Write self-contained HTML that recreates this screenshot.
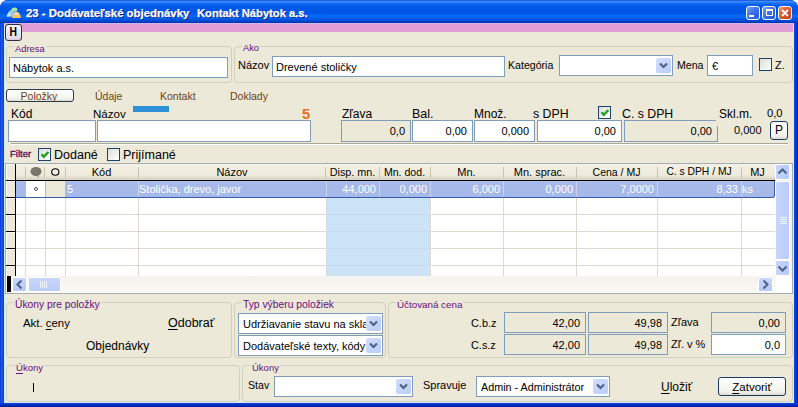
<!DOCTYPE html>
<html><head><meta charset="utf-8">
<style>
*{box-sizing:border-box;margin:0;padding:0}
html,body{width:798px;height:407px;overflow:hidden;background:#fff;font-family:"Liberation Sans",sans-serif;font-size:11px;color:#000}
body{position:relative}
u{text-underline-offset:2px}
.a{position:absolute}
#frame{position:absolute;left:0;top:0;width:798px;height:407px;background:#0831D9;border-radius:8px 8px 0 0}
#title{position:absolute;left:0;top:0;width:798px;height:23px;border-radius:8px 8px 0 0;background:linear-gradient(#0A48D0 0px,#3C8EFF 1.5px,#2A7CFA 2.5px,#0A66F2 4px,#0058E6 7px,#0055E4 13px,#0A6AF8 16px,#0060EE 18px,#0050DC 20px,#0042C8 21.5px,#0030A8 23px)}
#ttext{position:absolute;left:26px;top:6px;color:#fff;font-weight:bold;font-size:11.4px;line-height:14px;letter-spacing:0;-webkit-text-stroke:0.25px #fff;text-shadow:1px 1px #0A1883;white-space:pre}
#client{position:absolute;left:4px;top:23px;width:790px;height:380px;background:#ECE9D8;border:1px solid #DCE6F6;border-top-color:#D2B6EE}
#pink{position:absolute;left:5px;top:24px;width:788px;height:8px;background:#E09ED4}
.grp{position:absolute;border:1px solid #D0D0BF;border-radius:4px}
.gl{position:absolute;font-size:9.5px;color:#680A80;background:#ECE9D8;padding:0 1px;line-height:11px;white-space:nowrap}
.inp{position:absolute;background:#fff;border:1px solid #7F9DB9;white-space:nowrap;overflow:hidden;line-height:20px;padding-left:4px}
.dis{background:#ECE9D8}
.r{text-align:right;padding-right:5px;padding-left:0}
.lb{position:absolute;white-space:nowrap;line-height:13px}
.cb{position:absolute;width:13px;height:13px;border:1px solid #1C4370;background:linear-gradient(135deg,#DCDCD7,#FFFFFF)}
.dd{position:absolute;right:1px;top:2px;width:15px;bottom:2px;background:linear-gradient(135deg,#D2DEFC,#B9CCF8);border-radius:2px}
.dd svg{position:absolute;left:3px;top:4px}
.btn{position:absolute;border:1px solid #1A3A66;border-radius:3px;background:linear-gradient(#FFFFFF,#F3F3EE 80%,#DCD8CC);text-align:center;white-space:nowrap}
.hd{position:absolute;top:164px;height:16px;line-height:16px;text-align:center;white-space:nowrap}
.hs{position:absolute;top:167px;height:11px;width:1px;background:#C7C5B2}
.vl{position:absolute;width:1px;background:#DCD9D3}
.hl{position:absolute;height:1px;background:#DCD9D3}
.sel{position:absolute;top:181px;height:16px;line-height:16px;color:#fff;white-space:nowrap;text-align:right;padding-right:3px}
.ind{position:absolute;left:6px;width:9px;height:16px;background:#ECE9D8;border-left:1px solid #fff;border-top:1px solid #fff}
.ibl{position:absolute;left:6px;width:10px;height:1px;background:#000}
.f12{font-size:12px}
.tab{font-size:10.5px;color:#6E4212}
</style></head><body>
<div id="frame"></div>
<div class="a" style="left:0;top:20px;width:4px;height:387px;background:linear-gradient(90deg,#0836D0,#1A5CF2 40%,#0A4CE4 70%,#0640D0)"></div>
<div class="a" style="left:794px;top:20px;width:4px;height:387px;background:linear-gradient(90deg,#0A4CE8,#0838D0 50%,#0020A8)"></div>
<div class="a" style="left:0;top:403px;width:798px;height:4px;background:linear-gradient(#0A44D8,#0830C0 50%,#001A98)"></div>
<div id="title">
 <svg class="a" style="left:6px;top:7px" width="16" height="12" viewBox="0 0 16 12">
  <path d="M1 9.5 Q2 4 5.5 2.5 Q8.5 3.5 9 9.5 Z" fill="#8EC6F2"/>
  <path d="M0.5 9.5 Q1.5 5.5 4 4.5 L5 9.5Z" fill="#B9E0FA"/>
  <ellipse cx="8.5" cy="2.6" rx="2.8" ry="2.2" fill="#A8E6A8"/>
  <path d="M6 11 Q6.5 5.5 10.5 5 Q14.5 5.5 15 11 Z" fill="#F4C36A"/>
  <ellipse cx="10.5" cy="6.5" rx="2.2" ry="1.8" fill="#F9DC9A"/>
 </svg>
 <div id="ttext">23 - Dodávateľské objednávky</div><div id="ttext" style="left:197px;font-size:11.2px">Kontakt Nábytok a.s.</div>
</div>
<div class="a" style="left:746px;top:6px;width:14px;height:14px;border:1px solid #fff;border-radius:3px;background:linear-gradient(135deg,#7AA2F8 0%,#3F72E8 45%,#2157D9 100%)"><div class="a" style="left:2px;top:8px;width:5px;height:2px;background:#fff"></div></div>
<div class="a" style="left:762px;top:6px;width:14px;height:14px;border:1px solid #fff;border-radius:3px;background:linear-gradient(135deg,#7AA2F8 0%,#3F72E8 45%,#2157D9 100%)"><div class="a" style="left:3px;top:2px;width:7px;height:7px;border:1px solid #fff;border-top-width:2px"></div></div>
<div class="a" style="left:778px;top:6px;width:14px;height:14px;border:1px solid #fff;border-radius:3px;background:linear-gradient(135deg,#F09070 0%,#DE5A30 45%,#C2401A 100%)"><svg class="a" style="left:2px;top:2px" width="8" height="8" viewBox="0 0 8 8"><path d="M1 1 L7 7 M7 1 L1 7" stroke="#fff" stroke-width="1.8"/></svg></div>
<div id="client"></div>
<div id="pink"></div>
<!-- H button -->
<div class="a" style="left:5px;top:24px;width:17px;height:17px;border:1px solid #2F2F45;border-radius:3px;background:linear-gradient(#F6F0F8,#E4DCEA 85%,#D2CAD8);font-weight:bold;font-size:12px;line-height:15px;text-align:center"><span style="display:inline-block;transform:scaleX(0.86)">H</span></div>

<!-- Adresa group -->
<div class="grp" style="left:6px;top:46px;width:226px;height:37px"></div>
<div class="gl" style="left:14px;top:43px;font-size:9.4px">Adresa</div>
<div class="inp" style="left:9px;top:57px;width:219px;height:21px;padding-left:3px">Nábytok a.s.</div>

<!-- Ako group -->
<div class="grp" style="left:234px;top:46px;width:559px;height:37px"></div>
<div class="gl" style="left:242px;top:43px;font-size:9.3px">Ako</div>
<div class="lb" style="left:238px;top:59px">Názov</div>
<div class="inp" style="left:272px;top:56px;width:233px;height:21px;padding-left:3px">Drevené stoličky</div>
<div class="lb" style="left:508px;top:59px;font-size:10.6px">Kategória</div>
<div class="inp" style="left:559px;top:55px;width:114px;height:21px"><div class="dd"><svg width="9" height="7" viewBox="0 0 9 7"><path d="M1 1.5 L4.5 5 L8 1.5" stroke="#4D6185" stroke-width="2.2" fill="none"/></svg></div></div>
<div class="lb" style="left:677px;top:59px;font-size:10.6px">Mena</div>
<div class="inp" style="left:707px;top:55px;width:46px;height:21px">€</div>
<div class="cb" style="left:759px;top:58px"></div>
<div class="lb" style="left:775px;top:59px">Z.</div>

<!-- tabs -->
<div class="btn tab" style="left:6px;top:89px;padding-top:1px;padding-right:2px;width:68px;height:13px;line-height:11px;border-color:#2E3A48;overflow:hidden">Položky</div>
<div class="lb tab" style="left:95px;top:90px">Údaje</div>
<div class="lb tab" style="left:160px;top:90px">Kontakt</div>
<div class="lb tab" style="left:230px;top:90px">Doklady</div>
<div class="a" style="left:133px;top:106px;width:36px;height:6px;background:#2D8FD5"></div>

<!-- item edit row -->
<div class="lb" style="left:11px;top:108px;font-size:12px">Kód</div>
<div class="lb" style="left:93px;top:107px;font-size:11.6px">Názov</div>
<div class="lb" style="left:302px;top:107px;color:#E2702C;font-weight:bold;font-size:14.5px;line-height:14px">5</div>
<div class="lb f12" style="left:342px;top:108px">Zľava</div>
<div class="lb" style="left:412px;top:108px;font-size:12.5px">Bal.</div>
<div class="lb f12" style="left:474px;top:108px">Množ.</div>
<div class="lb" style="left:533px;top:108px;font-size:12.3px">s DPH</div>
<div class="cb" style="left:598px;top:106px"><svg class="a" style="left:1px;top:1px" width="11" height="11" viewBox="0 0 11 11"><path d="M1.6 4.2 L3.8 6.8 L8.4 2.0" stroke="#21A121" stroke-width="2.4" fill="none"/></svg></div>
<div class="lb" style="left:622px;top:108px;font-size:12.3px">C. s DPH</div>
<div class="lb f12" style="left:719px;top:108px">Skl.m.</div>
<div class="lb" style="left:767px;top:107px;font-size:11.2px">0,0</div>
<div class="inp" style="left:8px;top:120px;width:88px;height:22px"></div>
<div class="inp" style="left:97px;top:120px;width:214px;height:22px"></div>
<div class="inp dis r" style="left:341px;top:120px;width:70px;height:22px">0,0</div>
<div class="inp r" style="left:412px;top:120px;width:61px;height:22px">0,00</div>
<div class="inp r" style="left:474px;top:120px;width:61px;height:22px">0,000</div>
<div class="inp r" style="left:537px;top:120px;width:85px;height:22px">0,00</div>
<div class="inp dis r" style="left:624px;top:120px;width:94px;height:22px">0,00</div>
<div class="a" style="left:716px;top:120px;width:2px;height:6px;background:#ECE9D8"></div>
<div class="lb" style="left:734px;top:124px">0,000</div>
<div class="btn" style="left:770px;top:121px;width:18px;height:19px;line-height:17px;font-size:12px">P</div>
<div class="a" style="left:11px;top:143px;width:777px;height:1px;background:#ACA899"></div>
<div class="a" style="left:11px;top:144px;width:777px;height:1px;background:#fff"></div>

<!-- filter -->
<div class="lb" style="left:10px;top:146.5px;font-size:9.5px;color:#500858;-webkit-text-stroke:0.3px #500858">Filter</div>
<div class="cb" style="left:38px;top:148px"><svg class="a" style="left:1px;top:1px" width="11" height="11" viewBox="0 0 11 11"><path d="M1.6 4.2 L3.8 6.8 L8.4 2.0" stroke="#21A121" stroke-width="2.4" fill="none"/></svg></div>
<div class="lb" style="left:54px;top:149px;font-size:12.5px">Dodané</div>
<div class="cb" style="left:107px;top:148px"></div>
<div class="lb" style="left:123px;top:149px;font-size:12.5px">Prijímané</div>

<!-- grid -->
<div class="a" style="left:5px;top:163px;width:788px;height:131px;border:1px solid #A5ACB5;background:#fff"></div>
<!-- header -->
<div class="a" style="left:6px;top:164px;width:769px;height:16px;background:linear-gradient(#F4F0E4,#EEEBDD 70%,#E0DDCD 85%,#D2D0C2)"></div>
<div class="hs" style="left:25px"></div>
<div class="hs" style="left:44px"></div>
<div class="hs" style="left:65px"></div>
<div class="hs" style="left:138px"></div>
<div class="hs" style="left:325px"></div>
<div class="hs" style="left:379px"></div>
<div class="hs" style="left:430px"></div>
<div class="hs" style="left:503px"></div>
<div class="hs" style="left:576px"></div>
<div class="hs" style="left:657px"></div>
<div class="hs" style="left:741px"></div>
<svg class="a" style="left:29px;top:166px" width="14" height="13" viewBox="0 0 14 13"><ellipse cx="7" cy="5.5" rx="5.5" ry="4.5" fill="#7A766A"/><path d="M7 9 L10 12 L9 9Z" fill="#7A766A"/></svg>
<svg class="a" style="left:50px;top:167px" width="11" height="11" viewBox="0 0 11 11"><ellipse cx="5.3" cy="5" rx="3.6" ry="3.3" stroke="#000" stroke-width="1.1" fill="none"/></svg>
<div class="hd" style="left:65px;width:73px">Kód</div>
<div class="hd" style="left:138px;width:188px">Názov</div>
<div class="hd" style="left:326px;width:53px;font-size:10.8px">Disp. mn.</div>
<div class="hd" style="left:379px;width:51px;font-size:10.6px">Mn. dod.</div>
<div class="hd" style="left:430px;width:73px">Mn.</div>
<div class="hd" style="left:503px;width:73px">Mn. sprac.</div>
<div class="hd" style="left:576px;width:81px;font-size:10.5px">Cena / MJ</div>
<div class="hd" style="left:657px;width:84px;font-size:10.3px">C. s DPH / MJ</div>
<div class="hd" style="left:741px;width:33px">MJ</div>
<!-- indicator col -->
<div class="ibl" style="top:180px;width:769px"></div>
<div class="a" style="left:15px;top:164px;width:1px;height:112px;background:#000"></div>
<div class="ind" style="top:164px"></div>
<div class="ind" style="top:181px"></div>
<div class="ind" style="top:198px"></div>
<div class="ind" style="top:215px"></div>
<div class="ind" style="top:232px"></div>
<div class="ind" style="top:249px"></div>
<div class="ind" style="top:266px;height:10px"></div>
<div class="ibl" style="top:197px"></div>
<div class="ibl" style="top:214px"></div>
<div class="ibl" style="top:231px"></div>
<div class="ibl" style="top:248px"></div>
<div class="ibl" style="top:265px"></div>
<!-- body grid lines -->
<div class="hl" style="left:16px;top:214px;width:759px"></div>
<div class="hl" style="left:16px;top:231px;width:759px"></div>
<div class="hl" style="left:16px;top:248px;width:759px"></div>
<div class="hl" style="left:16px;top:265px;width:759px"></div>
<div class="vl" style="left:25px;top:197px;height:79px"></div>
<div class="vl" style="left:45px;top:197px;height:79px"></div>
<div class="vl" style="left:65px;top:197px;height:79px"></div>
<div class="vl" style="left:138px;top:197px;height:79px"></div>
<div class="vl" style="left:326px;top:197px;height:79px"></div>
<div class="vl" style="left:379px;top:197px;height:79px"></div>
<div class="vl" style="left:430px;top:197px;height:79px"></div>
<div class="vl" style="left:503px;top:197px;height:79px"></div>
<div class="vl" style="left:576px;top:197px;height:79px"></div>
<div class="vl" style="left:657px;top:197px;height:79px"></div>
<div class="vl" style="left:741px;top:197px;height:79px"></div>
<!-- light blue columns -->
<div class="a" style="left:326px;top:197px;width:104px;height:79px;background:#CBE3F5"></div>
<div class="a" style="left:326px;top:197px;width:1px;height:79px;background:#D4DCE4"></div>
<div class="a" style="left:379px;top:197px;width:1px;height:79px;background:#D2E0EC"></div>
<div class="a" style="left:327px;top:214px;width:103px;height:1px;background:#C8DCEC;box-shadow:0 17px 0 #C8DCEC,0 34px 0 #C8DCEC,0 51px 0 #C8DCEC"></div>
<!-- selected row -->
<div class="a" style="left:16px;top:181px;width:759px;height:17px;background:linear-gradient(#B6C6EE,#A6B9EA 1px,#A6B9E8 15px,#9CBAF4 15px);border-bottom:1px solid #3A5BA8;border-right:1px solid #3A5BA8;border-radius:0 0 3px 0"></div>
<div class="a" style="left:26px;top:181px;width:19px;height:16px;background:#fff"></div>
<div class="a" style="left:46px;top:181px;width:19px;height:16px;background:#ECE9D8"></div>
<div class="a" style="left:34px;top:187px;width:4px;height:4px;border:1px solid #555;border-radius:2px"></div>
<div class="vl" style="left:138px;top:181px;height:16px;background:#C7D3F2"></div>
<div class="vl" style="left:326px;top:181px;height:16px;background:#C7D3F2"></div>
<div class="vl" style="left:379px;top:181px;height:16px;background:#C7D3F2"></div>
<div class="vl" style="left:430px;top:181px;height:16px;background:#C7D3F2"></div>
<div class="vl" style="left:503px;top:181px;height:16px;background:#C7D3F2"></div>
<div class="vl" style="left:576px;top:181px;height:16px;background:#C7D3F2"></div>
<div class="vl" style="left:657px;top:181px;height:16px;background:#C7D3F2"></div>
<div class="vl" style="left:741px;top:181px;height:16px;background:#C7D3F2"></div>
<div class="sel" style="left:67px;text-align:left">5</div>
<div class="sel" style="left:139px;text-align:left">Stolička, drevo, javor</div>
<div class="sel" style="left:326px;width:53px">44,000</div>
<div class="sel" style="left:379px;width:51px">0,000</div>
<div class="sel" style="left:430px;width:73px">6,000</div>
<div class="sel" style="left:503px;width:73px">0,000</div>
<div class="sel" style="left:576px;width:81px">7,0000</div>
<div class="sel" style="left:657px;width:84px">8,33</div>
<div class="sel" style="left:742px;text-align:left">ks</div>
<!-- v scrollbar -->
<div class="a" style="left:775px;top:164px;width:17px;height:112px;background:#F3F1EC"></div>
<div class="a" style="left:775px;top:164px;width:15px;height:16px;background:linear-gradient(90deg,#C8D6FB,#B6C9F7);border:1px solid #fff;border-radius:2px"></div>
<svg class="a" style="left:778px;top:168px" width="9" height="7" viewBox="0 0 9 7"><path d="M0.5 5.5 L4.5 1.5 L8.5 5.5" stroke="#4D6185" stroke-width="2" fill="none"/></svg>
<div class="a" style="left:775px;top:181px;width:15px;height:79px;background:linear-gradient(90deg,#C8D6FB,#BACCF8);border:1px solid #fff;border-radius:2px"></div>
<div class="a" style="left:780px;top:217px;width:7px;height:1px;background:#EEF3FE;box-shadow:0 2px 0 #EEF3FE,0 4px 0 #EEF3FE,0 6px 0 #EEF3FE"></div>
<div class="a" style="left:775px;top:260px;width:15px;height:16px;background:linear-gradient(90deg,#C8D6FB,#B6C9F7);border:1px solid #fff;border-radius:2px"></div>
<svg class="a" style="left:778px;top:265px" width="9" height="7" viewBox="0 0 9 7"><path d="M0.5 1.5 L4.5 5.5 L8.5 1.5" stroke="#4D6185" stroke-width="2" fill="none"/></svg>
<!-- h scrollbar -->
<div class="a" style="left:6px;top:276px;width:769px;height:17px;background:linear-gradient(#F3F2EC,#FBFAF7)"></div>
<div class="a" style="left:7px;top:276px;width:4px;height:16px;background:#000"></div>
<div class="a" style="left:12px;top:277px;width:15px;height:15px;background:linear-gradient(#C8D6FB,#B6C9F7);border:1px solid #fff;border-radius:2px"></div>
<svg class="a" style="left:16px;top:280px" width="7" height="9" viewBox="0 0 7 9"><path d="M5.5 0.5 L1.5 4.5 L5.5 8.5" stroke="#4D6185" stroke-width="2" fill="none"/></svg>
<div class="a" style="left:28px;top:277px;width:33px;height:15px;background:linear-gradient(#C8D6FB,#BACCF8);border:1px solid #fff;border-radius:2px"></div>
<div class="a" style="left:40px;top:281px;width:1px;height:7px;background:#EEF3FE;box-shadow:2px 0 0 #EEF3FE,4px 0 0 #EEF3FE,6px 0 0 #EEF3FE"></div>
<div class="a" style="left:758px;top:277px;width:15px;height:15px;background:linear-gradient(#C8D6FB,#B6C9F7);border:1px solid #fff;border-radius:2px"></div>
<svg class="a" style="left:762px;top:280px" width="7" height="9" viewBox="0 0 7 9"><path d="M1.5 0.5 L5.5 4.5 L1.5 8.5" stroke="#4D6185" stroke-width="2" fill="none"/></svg>
<div class="a" style="left:775px;top:276px;width:17px;height:17px;background:#fff"></div>

<!-- bottom panels -->
<div class="grp" style="left:6px;top:302px;width:226px;height:56px"></div>
<div class="gl" style="left:14px;top:299px;font-size:10.3px">Úkony pre položky</div>
<div class="lb" style="left:23px;top:317px;font-size:11.4px">Akt. <u>c</u>eny</div>
<div class="lb" style="left:168px;top:317px;font-size:12.5px"><u>O</u>dobrať</div>
<div class="lb f12" style="left:86px;top:340px">Objednávky</div>

<div class="grp" style="left:234px;top:302px;width:152px;height:56px"></div>
<div class="gl" style="left:242px;top:299px;font-size:10.3px">Typ výberu položiek</div>
<div class="inp" style="left:238px;top:313px;width:145px;height:21px">Udržiavanie stavu na skla<div class="dd"><svg width="9" height="7" viewBox="0 0 9 7"><path d="M1 1.5 L4.5 5 L8 1.5" stroke="#4D6185" stroke-width="2.2" fill="none"/></svg></div></div>
<div class="inp" style="left:238px;top:335px;width:145px;height:21px">Dodávateľské texty, kódy<div class="dd"><svg width="9" height="7" viewBox="0 0 9 7"><path d="M1 1.5 L4.5 5 L8 1.5" stroke="#4D6185" stroke-width="2.2" fill="none"/></svg></div></div>

<div class="grp" style="left:388px;top:302px;width:405px;height:56px"></div>
<div class="gl" style="left:396px;top:299px;font-size:9.8px">Účtovaná cena</div>
<div class="lb" style="left:471px;top:317px;font-size:10.9px">C.b.z</div>
<div class="lb" style="left:471px;top:339px;font-size:10.9px">C.s.z</div>
<div class="inp dis r" style="left:504px;top:312px;width:82px;height:21px">42,00</div>
<div class="inp dis r" style="left:588px;top:312px;width:80px;height:21px">49,98</div>
<div class="inp dis r" style="left:504px;top:334px;width:82px;height:21px">42,00</div>
<div class="inp dis r" style="left:588px;top:334px;width:80px;height:21px">49,98</div>
<div class="lb" style="left:671px;top:316px">Zľava</div>
<div class="lb" style="left:671px;top:338px">Zľ. v %</div>
<div class="inp dis r" style="left:711px;top:312px;width:75px;height:21px">0,00</div>
<div class="inp r" style="left:711px;top:334px;width:75px;height:21px">0,0</div>

<div class="grp" style="left:6px;top:365px;width:234px;height:37px"></div>
<div class="gl" style="left:15px;top:362px"><u>Ú</u>kony</div>
<div class="a" style="left:33px;top:383px;width:1px;height:9px;background:#000"></div>

<div class="grp" style="left:242px;top:365px;width:551px;height:37px"></div>
<div class="gl" style="left:251px;top:362px">Úkony</div>
<div class="lb" style="left:248px;top:379px;font-size:10.6px">Stav</div>
<div class="inp" style="left:274px;top:376px;width:139px;height:21px"><div class="dd"><svg width="9" height="7" viewBox="0 0 9 7"><path d="M1 1.5 L4.5 5 L8 1.5" stroke="#4D6185" stroke-width="2.2" fill="none"/></svg></div></div>
<div class="lb" style="left:423px;top:379px;font-size:11px">Spravuje</div>
<div class="inp" style="left:476px;top:376px;width:134px;height:21px;font-size:10.8px">Admin - Administrátor<div class="dd"><svg width="9" height="7" viewBox="0 0 9 7"><path d="M1 1.5 L4.5 5 L8 1.5" stroke="#4D6185" stroke-width="2.2" fill="none"/></svg></div></div>
<div class="lb" style="left:661px;top:381px;font-size:12px"><u>U</u>ložiť</div>
<div class="btn" style="left:718px;top:377px;width:68px;height:19px;line-height:17px;padding-top:1px;font-size:11.5px"><u>Z</u>atvoriť</div>
</body></html>
